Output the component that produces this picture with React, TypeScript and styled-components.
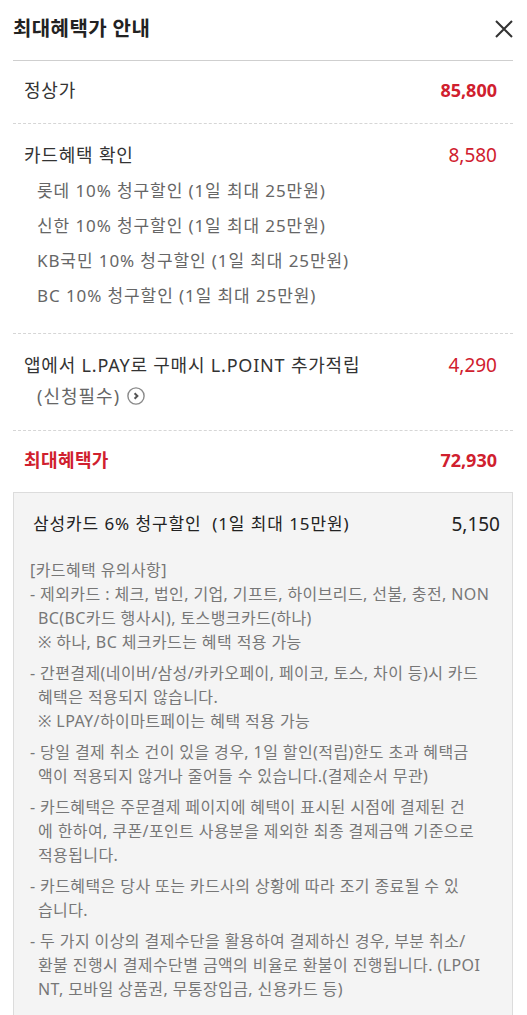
import React from "react";
import styled, { createGlobalStyle } from "styled-components";

const GlobalStyle = createGlobalStyle`
  html, body { margin: 0; padding: 0; background: #fff; }
  body {
    font-family: "Noto Sans", "Noto Sans CJK KR", sans-serif;
    color: #333;
    -webkit-font-smoothing: antialiased;
  }
`;

const RED = "#d0202e";

const Modal = styled.div`
  width: 527px;
  box-sizing: border-box;
  padding: 0 14px 0 13px;
`;

const Header = styled.header`
  height: 61px;
  display: flex;
  align-items: center;
  justify-content: space-between;
  border-bottom: 1px solid #cfcfcf;
  padding-bottom: 2px;
  box-sizing: border-box;
`;

const Title = styled.h1`
  margin: 0;
  font-size: 20px;
  font-weight: 700;
  color: #222;
  letter-spacing: 0.4px;
  line-height: 26px;
`;

const CloseButton = styled.button`
  border: 0;
  background: none;
  padding: 0;
  width: 18px;
  height: 18px;
  display: flex;
  cursor: pointer;
`;

const Section = styled.section<{ $top: number; $bottom: number; $dashed?: boolean }>`
  padding: ${(p) => p.$top}px 16px ${(p) => p.$bottom}px 11px;
  border-bottom: ${(p) => (p.$dashed ? "1px dashed #d6d6d6" : "0")};
`;

const Row = styled.div`
  display: flex;
  justify-content: space-between;
  align-items: flex-start;
`;

const Label = styled.span<{ $strong?: boolean }>`
  font-size: 18px;
  line-height: 26px;
  color: ${(p) => (p.$strong ? RED : "#333")};
  font-weight: ${(p) => (p.$strong ? 700 : 400)};
  letter-spacing: ${(p) => (p.$strong ? "0.4px" : "0.8px")};
`;

const Amount = styled.span<{ $bold?: boolean }>`
  font-size: ${(p) => (p.$bold ? 18 : 19)}px;
  line-height: 26px;
  color: ${RED};
  font-weight: ${(p) => (p.$bold ? 700 : 400)};
`;

const SubList = styled.ul`
  list-style: none;
  margin: 5px 0 0;
  padding: 0 0 0 13px;
`;

const SubItem = styled.li`
  font-size: 17px;
  line-height: 35px;
  color: #666;
  letter-spacing: 0.9px;
`;

const SubLine = styled.div`
  margin-top: 5px;
  padding-left: 13px;
  font-size: 18px;
  line-height: 26px;
  color: #666;
  display: flex;
  align-items: center;
  gap: 7px;
  letter-spacing: 1px;
`;

const InfoBox = styled.div`
  border: 1px solid #dcdcdc;
  border-bottom: 0;
  background: #f4f4f4;
  padding: 18px 12px 40px 16px;
`;

const CardRow = styled.div`
  display: flex;
  justify-content: space-between;
  padding-left: 3px;
`;

const CardText = styled.span`
  font-size: 17px;
  line-height: 26px;
  color: #222;
  letter-spacing: 0.9px;
  white-space: pre;
`;

const CardAmount = styled.span`
  font-size: 19px;
  line-height: 26px;
  color: #222;
`;

const NoteTitle = styled.div`
  margin-top: 21px;
  font-size: 16px;
  line-height: 24px;
  color: #777;
  letter-spacing: 0.4px;
`;

const NoteList = styled.ul`
  list-style: none;
  margin: 0;
  padding: 0;
`;

const Note = styled.li`
  font-size: 16px;
  line-height: 24px;
  color: #777;
  letter-spacing: 0.4px;
  white-space: nowrap;
  padding-left: 8px;
  text-indent: -8px;
  & + & { margin-top: 7px; }
`;

const XIcon = () => (
  <svg width="18" height="18" viewBox="0 0 18 18">
    <path d="M1 1L17 17M17 1L1 17" stroke="#333" strokeWidth="2" />
  </svg>
);

const CircleArrow = () => (
  <svg width="18" height="18" viewBox="0 0 18 18">
    <circle cx="9" cy="9" r="8.1" fill="#fff" stroke="#8a8a8a" strokeWidth="1.4" />
    <path d="M7.6 6.2L10.4 9L7.6 11.8" fill="none" stroke="#555" strokeWidth="2" />
  </svg>
);

const cards = ["롯데", "신한", "KB국민", "BC"];

const notes: string[][] = [
  [
    "- 제외카드 : 체크, 법인, 기업, 기프트, 하이브리드, 선불, 충전, NON",
    "BC(BC카드 행사시), 토스뱅크카드(하나)",
    "※ 하나, BC 체크카드는 혜택 적용 가능",
  ],
  [
    "- 간편결제(네이버/삼성/카카오페이, 페이코, 토스, 차이 등)시 카드",
    "혜택은 적용되지 않습니다.",
    "※ LPAY/하이마트페이는 혜택 적용 가능",
  ],
  [
    "- 당일 결제 취소 건이 있을 경우, 1일 할인(적립)한도 초과 혜택금",
    "액이 적용되지 않거나 줄어들 수 있습니다.(결제순서 무관)",
  ],
  [
    "- 카드혜택은 주문결제 페이지에 혜택이 표시된 시점에 결제된 건",
    "에 한하여, 쿠폰/포인트 사용분을 제외한 최종 결제금액 기준으로",
    "적용됩니다.",
  ],
  ["- 카드혜택은 당사 또는 카드사의 상황에 따라 조기 종료될 수 있", "습니다."],
  [
    "- 두 가지 이상의 결제수단을 활용하여 결제하신 경우, 부분 취소/",
    "환불 진행시 결제수단별 금액의 비율로 환불이 진행됩니다. (LPOI",
    "NT, 모바일 상품권, 무통장입금, 신용카드 등)",
  ],
];

export default function App() {
  return (
    <>
      <GlobalStyle />
      <Modal>
        <Header>
          <Title>최대혜택가 안내</Title>
          <CloseButton aria-label="닫기">
            <XIcon />
          </CloseButton>
        </Header>

        <Section $top={16} $bottom={20} $dashed>
          <Row>
            <Label>정상가</Label>
            <Amount $bold>85,800</Amount>
          </Row>
        </Section>

        <Section $top={18} $bottom={20} $dashed>
          <Row>
            <Label>카드혜택 확인</Label>
            <Amount>8,580</Amount>
          </Row>
          <SubList>
            {cards.map((c) => (
              <SubItem key={c}>{c} 10% 청구할인 (1일 최대 25만원)</SubItem>
            ))}
          </SubList>
        </Section>

        <Section $top={18} $bottom={21} $dashed>
          <Row>
            <Label>앱에서 L.PAY로 구매시 L.POINT 추가적립</Label>
            <Amount>4,290</Amount>
          </Row>
          <SubLine>
            (신청필수) <CircleArrow />
          </SubLine>
        </Section>

        <Section $top={16} $bottom={19}>
          <Row>
            <Label $strong>최대혜택가</Label>
            <Amount $bold>72,930</Amount>
          </Row>
        </Section>

        <InfoBox>
          <CardRow>
            <CardText>삼성카드 6% 청구할인  (1일 최대 15만원)</CardText>
            <CardAmount>5,150</CardAmount>
          </CardRow>
          <NoteTitle>[카드혜택 유의사항]</NoteTitle>
          <NoteList>
            {notes.map((n, i) => (
              <Note key={i}>
                {n.map((line, j) => (
                  <React.Fragment key={j}>
                    {j > 0 && <br />}
                    {line}
                  </React.Fragment>
                ))}
              </Note>
            ))}
          </NoteList>
        </InfoBox>
      </Modal>
    </>
  );
}
